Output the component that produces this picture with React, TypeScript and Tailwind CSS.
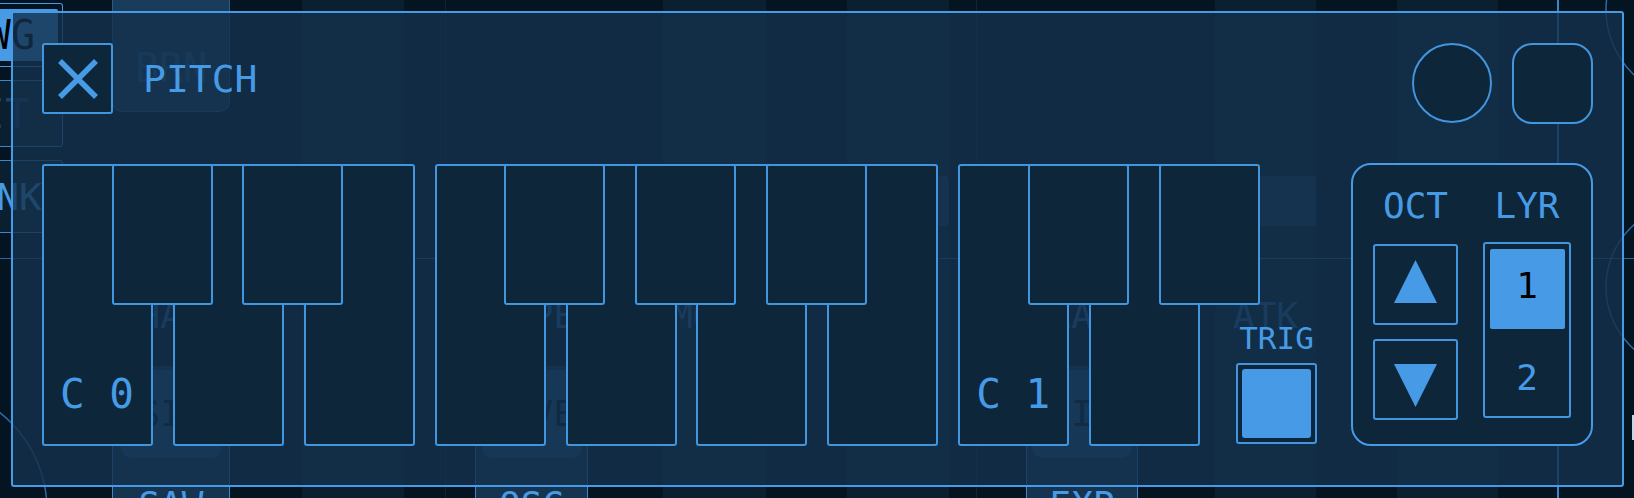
import type { ReactNode } from 'react'

const keyCls = 'rounded-[3px] border-2 border-[#4295df] bg-[#0d263a]'

const whites = ['C 0', '', '', '', '', '', '', 'C 1', '']
const blacks = [
  'left-[69.5px]',
  'left-[200.4px]',
  'left-[462px]',
  'left-[593px]',
  'left-[724px]',
  'left-[985.6px]',
  'left-[1116.5px]',
]

function LeftStack() {
  return (
    <div className="flex w-[64px] shrink-0 flex-col pt-[3px]">
      <div className="h-[64px] w-[63px] shrink-0 rounded-r-[3px] border-y border-r border-[#479be6] pb-[5px] pr-[4px] pt-[5px]">
        <div className="flex h-full items-center justify-end rounded-r-[2px] bg-[#479be6] pr-[23px] text-[40px] leading-none text-black">
          WG
        </div>
      </div>
      <div className="mt-[13px] flex h-[67px] w-[63px] shrink-0 items-center justify-end rounded-r-[3px] border-y border-r border-[#3d85c8] bg-[#0a1f30] pr-[33px] text-[40px] leading-none text-[#1f4264]">
        IT
      </div>
      <div className="mt-[13px] flex h-[73px] w-[63px] shrink-0 items-center justify-end rounded-r-[3px] border-y border-r border-[#3d85c8] bg-[#0a1f30] pr-[20px] text-[38px] leading-none">
        NK
      </div>
    </div>
  )
}

function ButtonCol({
  className,
  top,
  label,
  pad,
  bottom,
}: {
  className: string
  top?: string
  label: string
  pad: string
  bottom: string
}) {
  return (
    <div className={`flex shrink-0 flex-col ${className}`}>
      {top ? (
        <div className="flex h-[112px] shrink-0 items-end justify-center rounded-b-[10px] border-x border-b border-[#285a88] bg-[#1a3c5b] pb-[23px] text-[40px] leading-none text-[#2b6090]">
          {top}
        </div>
      ) : (
        <div className="h-[112px] shrink-0" />
      )}
      <div className="mt-[186px] shrink-0 text-center text-[36px] leading-none text-[#2f6ca6]">{label}</div>
      <div className="mt-[32px] flex h-[200px] shrink-0 flex-col items-center border-x border-[#3b86cc] bg-[#16344f] pt-[4px]">
        <div className="flex h-[88px] w-[100px] shrink-0 items-center justify-center rounded-[10px] bg-[#22507a] text-[36px] leading-none text-[#081826]">
          {pad}
        </div>
        <div className="mt-[29px] shrink-0 text-[36px] leading-none">{bottom}</div>
      </div>
    </div>
  )
}

function Strip({ className, label }: { className: string; label?: string }) {
  return (
    <div className={`flex shrink-0 flex-col bg-[#0a1f30] ${className}`}>
      <div className="mt-[176px] h-[50px] shrink-0 rounded-[4px] bg-[#1a3c5b]" />
      <div className="mt-[72px] shrink-0 text-center text-[36px] leading-none text-[#2f6ca6]">{label}</div>
    </div>
  )
}

function Keyboard() {
  return (
    <div className="relative mt-px flex h-[282px] w-[1158px] shrink-0 gap-[19.875px]">
      {whites.map((label, i) => (
        <div key={i} className={`flex w-[111px] shrink-0 flex-col justify-end pb-[29px] pl-[16px] ${keyCls}`}>
          {label && <span className="whitespace-pre text-[41px] leading-none">{label}</span>}
        </div>
      ))}
      {blacks.map((pos) => (
        <div key={pos} className={`absolute top-0 h-[141px] w-[101px] ${pos} ${keyCls}`} />
      ))}
    </div>
  )
}

function SmallBox({ children, className }: { children: ReactNode; className: string }) {
  return (
    <div className={`flex h-[81px] w-[85px] justify-center rounded-[3px] border-2 border-[#4295df] ${className}`}>
      {children}
    </div>
  )
}

function OctPanel() {
  return (
    <div className="ml-auto flex h-[283px] w-[242px] gap-[25px] rounded-[20px] border-2 border-[#479be6] bg-[#0d263a] px-[20px] pt-[23px]">
      <div className="flex w-[85px] flex-col items-center">
        <span className="text-[36px] leading-none">OCT</span>
        <SmallBox className="mt-[20px] pt-[14px]">
          <svg width="43" height="43" viewBox="0 0 43 43">
            <path d="M21.5 0 L43 43 L0 43 Z" fill="#479be6" />
          </svg>
        </SmallBox>
        <SmallBox className="mt-[14px] pt-[23px]">
          <svg width="43" height="43" viewBox="0 0 43 43">
            <path d="M0 0 L43 0 L21.5 43 Z" fill="#479be6" />
          </svg>
        </SmallBox>
      </div>
      <div className="flex w-[88px] flex-col items-center">
        <span className="text-[36px] leading-none">LYR</span>
        <div className="mt-[18px] flex h-[176px] w-[88px] flex-col rounded-[3px] border-2 border-[#4295df] p-[4.5px]">
          <div className="flex h-[80px] items-center justify-center rounded-[2px] bg-[#479be6] pb-[6px] text-[36px] leading-none text-black">
            1
          </div>
          <div className="flex flex-1 items-center justify-center pt-[16px] text-[36px] leading-none">2</div>
        </div>
      </div>
    </div>
  )
}

function PitchPanel() {
  return (
    <div className="absolute left-[11px] top-[11px] flex h-[476px] w-[1613px] flex-col rounded-[3px] border-2 border-[#479be6] bg-[#14314c]/80 px-[29px] pt-[30px]">
      <div className="flex h-[81px] items-start">
        <div className="flex h-[71px] w-[71px] items-center justify-center rounded-[3px] border-2 border-[#4295df] bg-[#0d263a]">
          <svg width="40" height="40" viewBox="0 0 40 40">
            <path d="M2 2 L38 38 M38 2 L2 38" stroke="#479be6" strokeWidth="5.5" />
          </svg>
        </div>
        <div className="ml-[30px] flex h-[71px] items-center text-[38px] leading-none">PITCH</div>
        <div className="ml-auto flex gap-[20px]">
          <div className="h-[80px] w-[80px] rounded-full border-2 border-[#4295df] bg-[#0d263a]" />
          <div className="h-[81px] w-[81px] rounded-[20px] border-2 border-[#4295df] bg-[#0d263a]" />
        </div>
      </div>

      <div className="mt-[39px] flex items-start">
        <Keyboard />
        <div className="mb-[2px] ml-[36px] flex w-[81px] flex-col items-center self-end">
          <span className="text-[31px] leading-none">TRIG</span>
          <div className="mt-[9px] h-[81px] w-[81px] rounded-[3px] border-2 border-[#4295df] bg-[#0d263a] p-[4px]">
            <div className="h-full w-full rounded-[3px] bg-[#479be6]" />
          </div>
        </div>
        <OctPanel />
      </div>
    </div>
  )
}

export default function App() {
  return (
    <div className="relative h-[498px] w-[1634px] overflow-hidden bg-[#041421] font-['DejaVu_Sans_Mono',monospace] text-[#479be6]">
      <div className="flex h-full">
        <LeftStack />
        <div className="w-[48px] shrink-0" />
        <ButtonCol className="w-[118px]" top="BRN" label="SHAPE" pad="SIN" bottom="SAW" />
        <div className="w-[72px] shrink-0" />
        <Strip className="w-[102px]" />
        <div className="w-[41px] shrink-0" />
        <div className="w-px shrink-0 bg-[#0e2538]" />
        <div className="w-[29px] shrink-0" />
        <ButtonCol className="w-[113px]" label="TYPE" pad="WAVE" bottom="OSC" />
        <div className="w-[75px] shrink-0" />
        <Strip className="w-[103px]" label="MODE" />
        <div className="w-[81px] shrink-0" />
        <Strip className="w-[102px]" />
        <div className="w-[27px] shrink-0" />
        <div className="w-px shrink-0 bg-[#0e2538]" />
        <div className="w-[49px] shrink-0" />
        <ButtonCol className="w-[112px]" label="LAG" pad="LIN" bottom="EXP" />
        <div className="w-[77px] shrink-0" />
        <Strip className="w-[101px]" label="ATK" />
        <div className="w-[81px] shrink-0" />
        <Strip className="w-[101px]" />
        <div className="w-[59px] shrink-0" />
        <div className="w-[2px] shrink-0 bg-[#3b86cc]" />
        <div className="relative w-[75px] shrink-0">
          <svg className="absolute left-0 top-0" width="75" height="498" viewBox="0 0 75 498">
            <circle cx="136" cy="10" r="89" fill="none" stroke="#2d6aa3" strokeWidth="1.5" />
            <circle cx="130" cy="287" r="83" fill="none" stroke="#2d6aa3" strokeWidth="1.5" />
            <rect x="73" y="415" width="2" height="25" fill="#c9d6e2" />
          </svg>
        </div>
      </div>

      <div className="absolute left-0 top-[258px] h-px w-full bg-[#2a68a2]" />
      <svg className="absolute left-0 top-0" width="64" height="498" viewBox="0 0 64 498">
        <circle cx="-77" cy="510" r="124" fill="none" stroke="#2d6aa3" strokeWidth="1.5" />
      </svg>

      <PitchPanel />
    </div>
  )
}
